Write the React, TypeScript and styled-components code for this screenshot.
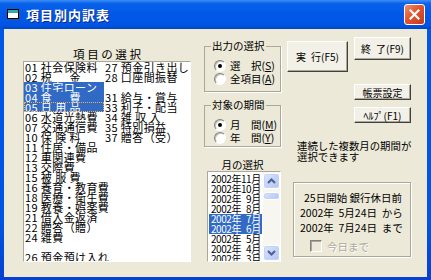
import React from "react";
import styled, { createGlobalStyle } from "styled-components";

const GlobalStyle = createGlobalStyle`
  html, body { margin:0; padding:0; background:#fff; }
  body { font-family:"Noto Sans CJK JP", "Liberation Sans", sans-serif; }
`;

const FONT = `"Noto Sans CJK JP", "Liberation Sans", sans-serif`;

const Window = styled.div`
  width:431px;
  height:280px;
  display:flex;
  flex-direction:column;
  background:linear-gradient(180deg, #0058E6 0%, #0054E3 80%, #0840D0 100%);
  overflow:hidden;
`;

const TitleBar = styled.div`
  height:29px;
  flex:none;
  display:flex;
  align-items:center;
  padding:0 6px 0 7px;
  background:linear-gradient(180deg, #3C8EF8 0%, #0B63EA 12%, #0058E6 45%, #0056E4 85%, #0046CC 100%);
`;

const Title = styled.div`
  margin-left:6px;
  color:#fff;
  font:bold 13px/1 ${FONT};
  letter-spacing:1px;
  text-shadow:1px 1px 0 #0A2A90;
`;

const CloseBtn = styled.div`
  margin-left:auto;
  width:21px;
  height:21px;
  box-sizing:border-box;
  border:1px solid #fff;
  border-radius:3px;
  background:linear-gradient(135deg, #F09070 0%, #E2542E 45%, #C8381A 100%);
  display:flex;
  align-items:center;
  justify-content:center;
`;

const Client = styled.div`
  flex:1;
  margin:0 4px 3px;
  padding-left:19px;
  display:flex;
  background:#ECE9D8;
  font-size:10px;
  color:#000;
`;

/* left column */
const LeftCol = styled.div`
  width:168px;
  padding-top:20px;
`;

const Caption = styled.div`
  text-align:center;
  font-size:11.5px;
  line-height:10px;
  height:10px;
  margin-bottom:2px;
  white-space:pre;
`;

const ItemList = styled.div`
  width:168px;
  height:201px;
  box-sizing:border-box;
  background:#fff;
  border:1px solid;
  border-color:#ACA899 #fff #fff #ACA899;
  display:grid;
  grid-template-columns:80px 1fr;
  grid-template-rows:repeat(20, 10px);
  grid-auto-flow:column;
  overflow:hidden;
  font-size:11px;
  letter-spacing:0.4px;
`;

const Item = styled.div<{ $sel?: boolean; $focus?: boolean }>`
  height:10px;
  line-height:10px;
  white-space:pre;
  padding-left:1px;
  background:${p => (p.$sel ? "#316AC5" : "transparent")};
  color:${p => (p.$sel ? "#fff" : "#000")};
  ${p => p.$focus && "outline:1px dotted #F0B050; outline-offset:-1px;"}
`;

/* middle column */
const MidCol = styled.div`
  width:77px;
  margin-left:13px;
  padding-top:11px;
  display:flex;
  flex-direction:column;
`;

const Group = styled.fieldset<{ $h: number; $mt?: number }>`
  margin:${p => p.$mt ?? 0}px 0 0;
  padding:7px 0 0 9px;
  height:${p => p.$h}px;
  box-sizing:border-box;
  border:1px solid #ACA899;
  box-shadow:1px 1px 0 #fff;
  min-width:0;
`;

const Legend = styled.legend`
  margin-left:-3px;
  padding:0 1px;
  font-size:10.5px;
  line-height:12px;
`;

const RadioRow = styled.div`
  height:13px;
  display:flex;
  align-items:center;
  gap:4px;
  font-size:10.5px;
  line-height:13px;
  white-space:pre;
`;

const RadioDot = styled.span<{ $on?: boolean }>`
  width:12px;
  height:12px;
  box-sizing:border-box;
  border-radius:50%;
  border:1px solid;
  border-color:#808080 #fff #fff #808080;
  background:#fff;
  box-shadow:inset 1px 1px 0 #C8C4B4;
  display:flex;
  align-items:center;
  justify-content:center;
  &::after {
    content:"";
    width:4px;
    height:4px;
    border-radius:50%;
    background:${p => (p.$on ? "#000" : "transparent")};
  }
`;

const MonthCaption = styled.div`
  margin-top:12px;
  height:12px;
  line-height:12px;
  text-align:center;
  font-size:10.5px;
`;

const MonthBox = styled.div`
  margin-left:3px;
  width:74px;
  height:91px;
  box-sizing:border-box;
  border:1px solid;
  border-color:#ACA899 #fff #fff #ACA899;
  background:#fff;
  display:flex;
`;

const MonthItems = styled.div`
  flex:1;
  min-width:0;
  padding-top:2px;
  overflow:hidden;
`;

const Month = styled.div<{ $sel?: boolean }>`
  height:10px;
  line-height:10px;
  margin:0 1px;
  padding-left:2px;
  white-space:pre;
  font-size:10px;
  letter-spacing:-0.45px;
  background:${p => (p.$sel ? "#316AC5" : "transparent")};
  color:${p => (p.$sel ? "#fff" : "#000")};
`;

const ScrollBar = styled.div`
  width:17px;
  flex:none;
  display:flex;
  flex-direction:column;
  background:#F7F6F1;
`;

const ScrollBtn = styled.div<{ $h: number; $mt?: number }>`
  height:${p => p.$h}px;
  margin-top:${p => p.$mt ?? 0}px;
  box-sizing:border-box;
  border:1px solid #fff;
  border-radius:3px;
  background:linear-gradient(135deg, #DCE6FD 0%, #C3D4FC 50%, #B0C6F6 100%);
  box-shadow:0 0 0 1px #C6D4F4 inset;
  display:flex;
  align-items:center;
  justify-content:center;
`;

const Spacer = styled.div`
  flex:1;
`;

/* right column */
const RightCol = styled.div`
  width:124px;
  margin-left:6px;
  padding-top:8px;
  display:flex;
  flex-direction:column;
`;

const TopButtons = styled.div`
  display:flex;
  align-items:flex-start;
  gap:6px;
`;

const Btn = styled.div<{ $w: number; $h: number; $mt?: number }>`
  width:${p => p.$w}px;
  height:${p => p.$h}px;
  margin-top:${p => p.$mt ?? 0}px;
  box-sizing:border-box;
  display:flex;
  align-items:center;
  justify-content:center;
  font-size:10px;
  white-space:pre;
  background:#F2F0E7;
  border:1px solid;
  border-color:#fff #404040 #404040 #fff;
  box-shadow:inset -1px -1px 0 #ACA899;
`;

const SideBtn = styled(Btn)`
  align-self:flex-end;
`;

const Note = styled.div`
  margin:17px 0 0 10px;
  font-size:10.4px;
  line-height:11px;
  white-space:nowrap;
`;

const InfoBox = styled.div`
  margin:20px 0 0 6px;
  height:75px;
  box-sizing:border-box;
  border:1px solid #ACA899;
  box-shadow:1px 1px 0 #fff, inset 1px 1px 0 #fff;
  padding:7px 0 0 6px;
`;

const InfoLine = styled.div<{ $indent?: number }>`
  height:15px;
  line-height:15px;
  padding-left:${p => p.$indent ?? 0}px;
  font-size:10.5px;
  white-space:pre;
`;

const CheckRow = styled.div`
  margin:5px 0 0 10px;
  height:12px;
  display:flex;
  align-items:center;
  gap:5px;
  font-size:10.5px;
  color:#ACA899;
  text-shadow:1px 1px 0 #fff;
`;

const CheckBox = styled.span`
  width:12px;
  height:12px;
  box-sizing:border-box;
  border:1px solid;
  border-color:#808080 #fff #fff #808080;
  box-shadow:inset 1px 1px 0 #ACA899;
  background:#ECE9D8;
`;

const col1 = [
  "01 社会保険料",
  "02 税\u3000\u2002金",
  "03 住宅ローン",
  "04 食\u3000\u2002費",
  "05 日 用 品",
  "06 水道光熱費",
  "07 交通通信費",
  "10 保 険 料",
  "11 住居・備品",
  "12 車関連費",
  "13 交際費",
  "15 被 服 費",
  "16 養育・教育費",
  "18 医療・衛生費",
  "19 教養・娯楽費",
  "21 借入金返済",
  "22 贈答（贈）",
  "24 雑費",
  "",
  "26 預金預け入れ",
];

const col2 = [
  "27 預金引き出し",
  "28 口座間振替",
  "",
  "31 給与・賞与",
  "33 利子・配当",
  "34 雑 収 入",
  "35 特別損益",
  "37 贈答（受）",
];

const months = [
  "2002年11月",
  "2002年10月",
  "2002年\u20079月",
  "2002年\u20078月",
  "2002年\u20077月",
  "2002年\u20076月",
  "2002年\u20075月",
  "2002年\u20074月",
  "2002年\u20073月",
];

const Chevron = ({ up }: { up?: boolean }) => (
  <svg width="9" height="6" viewBox="0 0 9 6">
    <path
      d={up ? "M1 5 L4.5 1.5 L8 5" : "M1 1 L4.5 4.5 L8 1"}
      fill="none"
      stroke="#4D6185"
      strokeWidth="2"
    />
  </svg>
);

const WinIcon = () => (
  <svg width="13" height="11" viewBox="0 0 13 11">
    <rect x="1.5" y="1.5" width="11" height="9" fill="#555" />
    <rect x="0.5" y="0.5" width="11" height="9" fill="#fff" stroke="#000" />
    <rect x="1" y="1" width="10" height="3" fill="#3AA8A8" />
  </svg>
);

export default function App() {
  return (
    <>
      <GlobalStyle />
      <Window>
        <TitleBar>
          <WinIcon />
          <Title>項目別内訳表</Title>
          <CloseBtn>
            <svg width="11" height="11" viewBox="0 0 11 11">
              <path d="M1.5 1.5 L9.5 9.5 M9.5 1.5 L1.5 9.5" stroke="#fff" strokeWidth="2.2" strokeLinecap="square" />
            </svg>
          </CloseBtn>
        </TitleBar>
        <Client>
          <LeftCol>
            <Caption>項 目 の 選 択</Caption>
            <ItemList>
              {col1.map((t, i) => (
                <Item key={"a" + i} $sel={i >= 2 && i <= 4} $focus={i === 4}>
                  {t}
                </Item>
              ))}
              {col2.map((t, i) => (
                <Item key={"b" + i}>{t}</Item>
              ))}
            </ItemList>
          </LeftCol>

          <MidCol>
            <Group $h={52}>
              <Legend>出力の選択</Legend>
              <RadioRow>
                <RadioDot $on />
                <span>選　択(<u>S</u>)</span>
              </RadioRow>
              <RadioRow>
                <RadioDot />
                <span>全項目(<u>A</u>)</span>
              </RadioRow>
            </Group>
            <Group $h={48} $mt={7}>
              <Legend>対象の期間</Legend>
              <RadioRow>
                <RadioDot $on />
                <span>月　間(<u>M</u>)</span>
              </RadioRow>
              <RadioRow>
                <RadioDot />
                <span>年　間(<u>Y</u>)</span>
              </RadioRow>
            </Group>
            <MonthCaption>月の選択</MonthCaption>
            <MonthBox>
              <MonthItems>
                {months.map((m, i) => (
                  <Month key={m} $sel={i === 4 || i === 5}>
                    {m}
                  </Month>
                ))}
              </MonthItems>
              <ScrollBar>
                <ScrollBtn $h={16} $mt={1}>
                  <Chevron up />
                </ScrollBtn>
                <ScrollBtn $h={8} $mt={3} />
                <Spacer />
                <ScrollBtn $h={16}>
                  <Chevron />
                </ScrollBtn>
              </ScrollBar>
            </MonthBox>
          </MidCol>

          <RightCol>
            <TopButtons>
              <Btn $w={61} $h={31} $mt={4}>{"実\u2002行(F5)"}</Btn>
              <Btn $w={57} $h={23}>{"終\u2002了(F9)"}</Btn>
            </TopButtons>
            <SideBtn $w={57} $h={16} $mt={12}>帳票設定</SideBtn>
            <SideBtn $w={57} $h={16} $mt={7}>ﾍﾙﾌﾟ(F1)</SideBtn>
            <Note>
              連続した複数月の期間が
              <br />
              選択できます
            </Note>
            <InfoBox>
              <InfoLine $indent={4}>25日開始 銀行休日前</InfoLine>
              <InfoLine>{"2002年  5月24日  から"}</InfoLine>
              <InfoLine>{"2002年  7月24日  まで"}</InfoLine>
              <CheckRow>
                <CheckBox />
                <span>今日まで</span>
              </CheckRow>
            </InfoBox>
          </RightCol>
        </Client>
      </Window>
    </>
  );
}
